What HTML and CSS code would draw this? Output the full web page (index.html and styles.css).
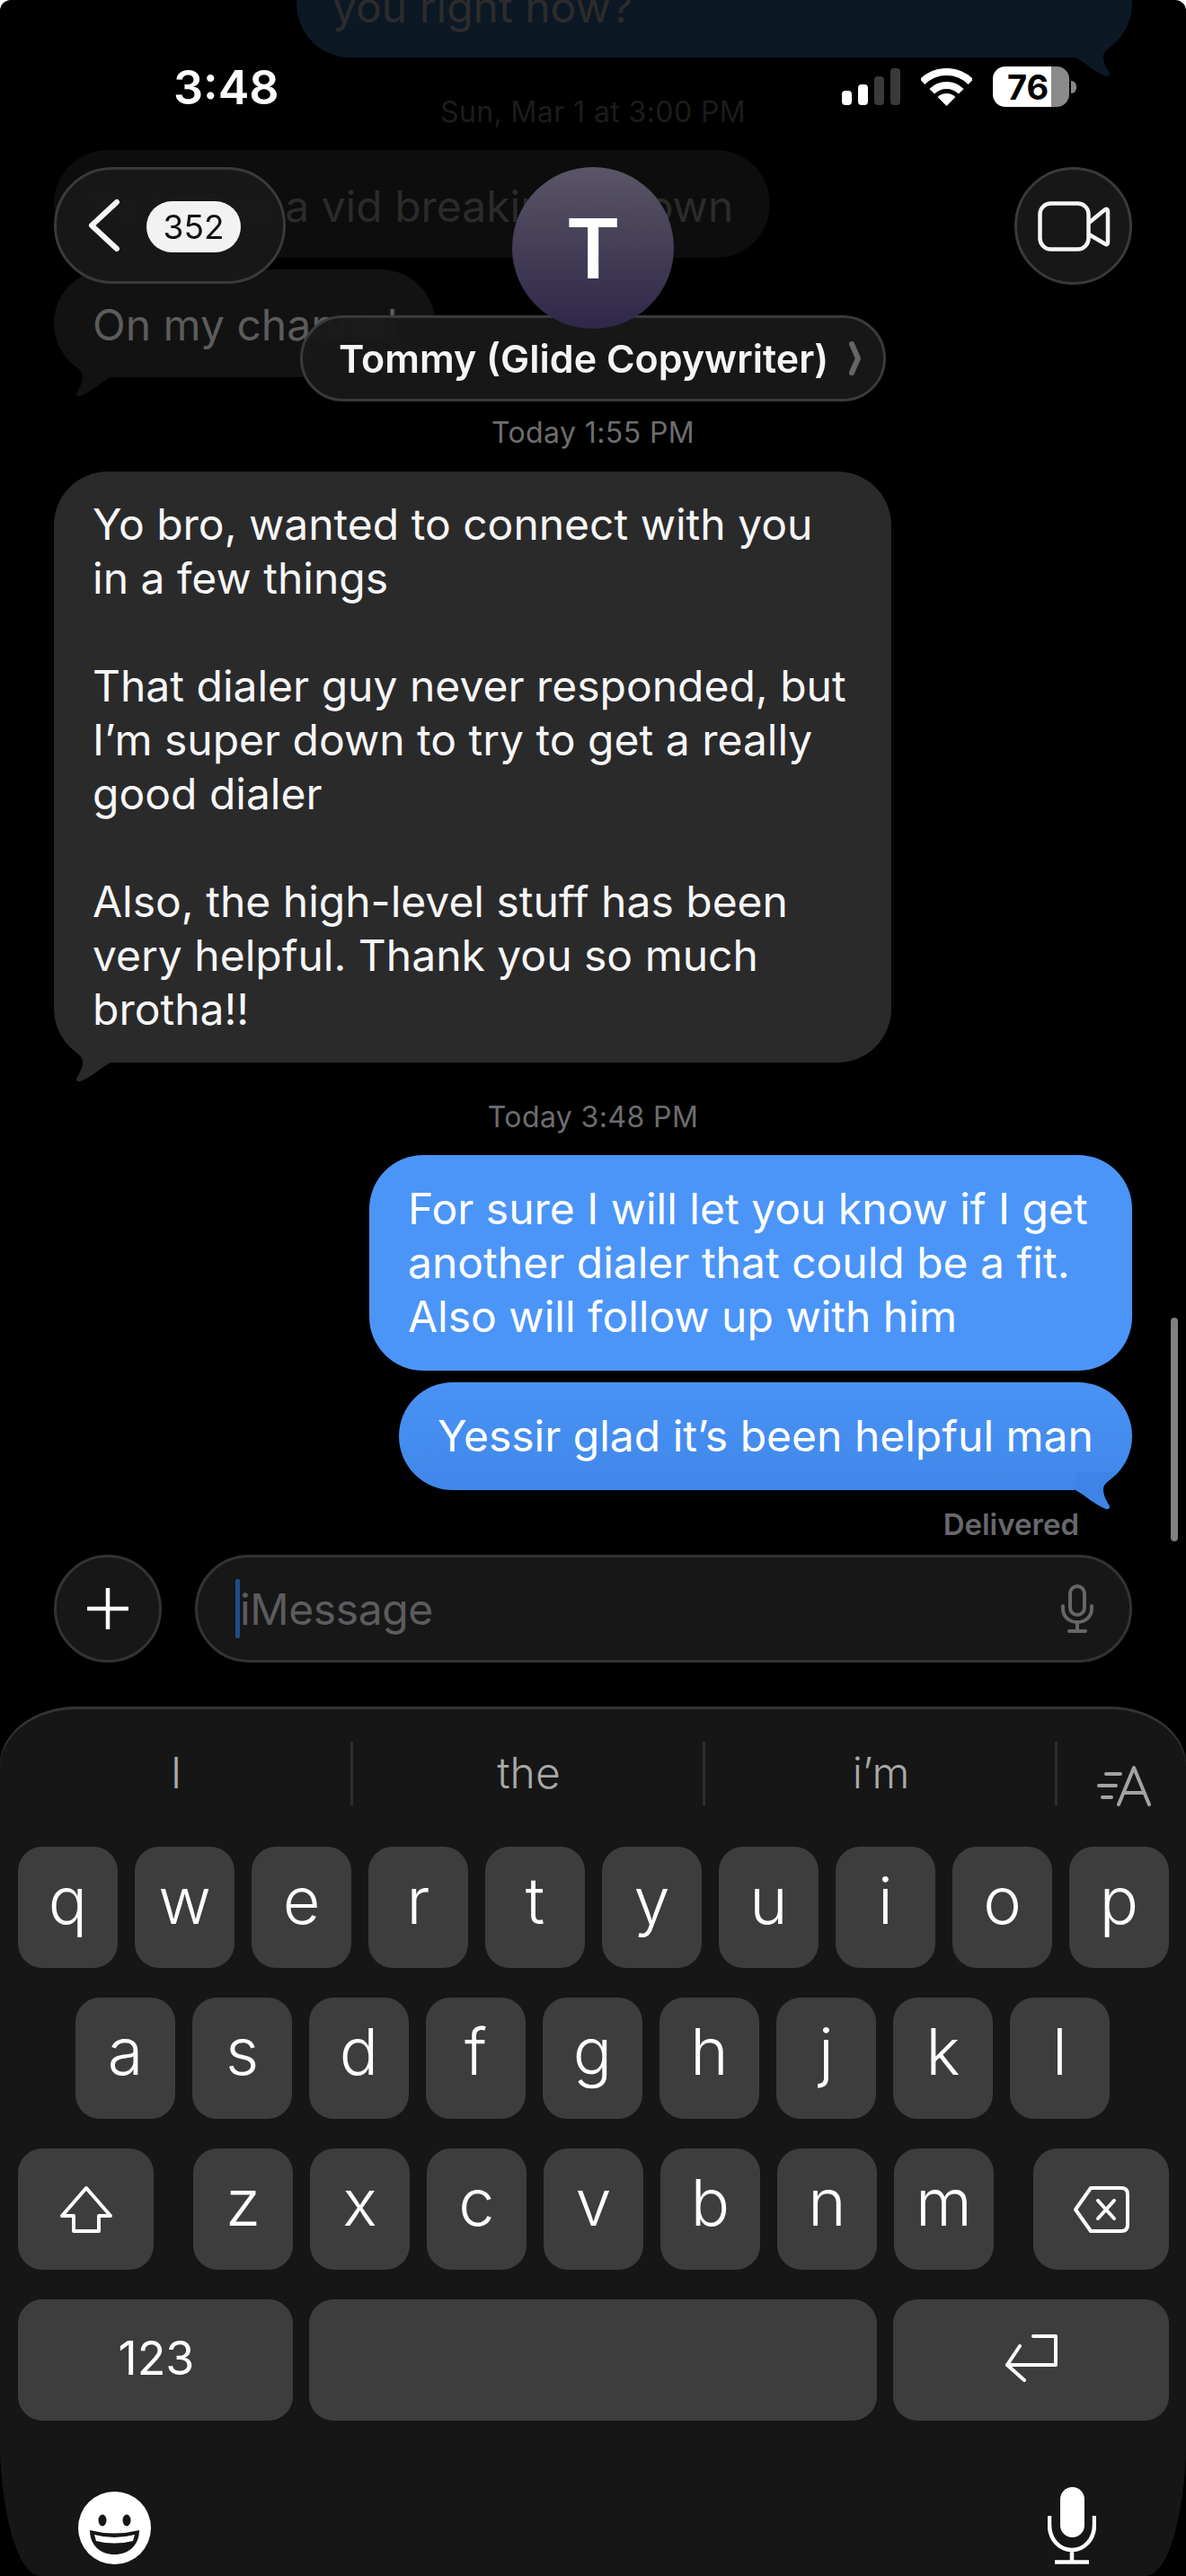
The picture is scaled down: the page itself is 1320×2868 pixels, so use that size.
FILE: index.html
```html
<!DOCTYPE html>
<html lang="en">
<head>
<meta charset="utf-8">
<title>Messages</title>
<link rel="stylesheet" href="styles.css">
</head>
<body>
<div class="screen">
  <main class="thread">
    <div class="bubble faded-blue bubble-top">you right now?
      <svg class="tail tail-right" viewBox="0 0 64 44"><path d="M18 2C24 12 32 14 32 21C32 29 28 34 25 40Q25 44 29 43C42 38 52 28 63 22V2Z"/></svg>
    </div>
    <div class="stamp stamp-dim stamp-sun">Sun, Mar 1 at 3:00 PM</div>
    <div class="bubble faded-a">Ya I have a vid breaking it down</div>
    <div class="bubble faded-b">On my channel
      <svg class="tail tail-left" viewBox="0 0 64 44"><path d="M18 2C24 12 32 14 32 21C32 29 28 34 25 40Q25 44 29 43C42 38 52 28 63 22V2Z"/></svg>
    </div>
    <div class="stamp stamp-one">Today 1:55 PM</div>
    <div class="bubble incoming">Yo bro, wanted to connect with you<br>in a few things<br><br>That dialer guy never responded, but<br>I’m super down to try to get a really<br>good dialer<br><br>Also, the high-level stuff has been<br>very helpful. Thank you so much<br>brotha!!
      <svg class="tail tail-left" viewBox="0 0 64 44"><path d="M18 2C24 12 32 14 32 21C32 29 28 34 25 40Q25 44 29 43C42 38 52 28 63 22V2Z"/></svg>
    </div>
    <div class="stamp stamp-two">Today 3:48 PM</div>
    <div class="bubble outgoing out-one">For sure I will let you know if I get<br>another dialer that could be a fit.<br>Also will follow up with him</div>
    <div class="bubble outgoing out-two">Yessir glad it’s been helpful man
      <svg class="tail tail-right" viewBox="0 0 64 44"><path d="M18 2C24 12 32 14 32 21C32 29 28 34 25 40Q25 44 29 43C42 38 52 28 63 22V2Z"/></svg>
    </div>
    <div class="delivered">Delivered</div>
  </main>

  <section class="composer">
    <div class="plus">
      <svg width="46" height="46" viewBox="0 0 46 46"><path d="M23 1V45M1 23H45" stroke="#fff" stroke-width="4.5" stroke-linecap="round" fill="none"/></svg>
    </div>
    <div class="field">
      <span class="caret"></span>
      <span class="placeholder">iMessage</span>
      <svg class="field-mic" width="36" height="54" viewBox="0 0 36 54" fill="none" stroke="#666" stroke-width="4" stroke-linecap="round"><rect x="10" y="2" width="16" height="32" rx="8"/><path d="M2 24V27C2 36 9 42 18 42C27 42 34 36 34 27V24M18 42V52M9 52H27"/></svg>
    </div>
  </section>

  <section class="keyboard">
    <div class="suggest">
      <div class="sug">I</div>
      <div class="sug sug-line">the</div>
      <div class="sug sug-line">i’m</div>
      <div class="sug sug-line sug-icon">
        <svg width="60" height="46" viewBox="0 0 60 46" fill="none" stroke="#a3a3a3" stroke-width="4" stroke-linecap="round" stroke-linejoin="round"><path d="M10 10H26M2 23H21M6 36H16"/><path d="M24 44L41 3L58 44M30 31H52"/></svg>
      </div>
    </div>
    <div class="rows">
      <div class="row"><span class="key">q</span><span class="key">w</span><span class="key">e</span><span class="key">r</span><span class="key">t</span><span class="key">y</span><span class="key">u</span><span class="key">i</span><span class="key">o</span><span class="key">p</span></div>
      <div class="row row-home"><span class="key">a</span><span class="key">s</span><span class="key">d</span><span class="key">f</span><span class="key">g</span><span class="key">h</span><span class="key">j</span><span class="key">k</span><span class="key">l</span></div>
      <div class="row row-third">
        <span class="key key-mod">
          <svg width="60" height="54" viewBox="0 0 60 54" fill="none" stroke="#fff" stroke-width="4" stroke-linejoin="round"><path d="M30 3L57 34H44V51H16V34H3Z"/></svg>
        </span>
        <div class="letters"><span class="key">z</span><span class="key">x</span><span class="key">c</span><span class="key">v</span><span class="key">b</span><span class="key">n</span><span class="key">m</span></div>
        <span class="key key-mod">
          <svg width="64" height="54" viewBox="0 0 64 54" fill="none" stroke="#fff" stroke-width="4" stroke-linejoin="round" stroke-linecap="round"><path d="M20 3H54Q61 3 61 10V44Q61 51 54 51H20L3 27Z"/><path d="M28 17L46 37M46 17L28 37"/></svg>
        </span>
      </div>
      <div class="row row-bottom">
        <span class="key key-num">123</span>
        <span class="key key-space"></span>
        <span class="key key-return">
          <svg width="60" height="54" viewBox="0 0 60 54" fill="none" stroke="#fff" stroke-width="4" stroke-linejoin="round" stroke-linecap="round"><path d="M32 3H57V35H3"/><path d="M17 14L3 35L22 52"/></svg>
        </span>
      </div>
    </div>
    <div class="kb-foot">
      <svg width="81" height="81" viewBox="0 0 81 81"><circle cx="40.5" cy="40.5" r="40.5" fill="#fff"/><ellipse cx="27" cy="32" rx="4.5" ry="6.5" fill="#161616"/><ellipse cx="54" cy="32" rx="4.5" ry="6.5" fill="#161616"/><path d="M13 43Q40 50 68 43C68 60 56 70 40.5 70C25 70 13 60 13 43Z" fill="#161616"/><path d="M18 48Q40 54 63 48L61 55Q40 60 20 55Z" fill="#fff"/></svg>
      <svg width="54" height="86" viewBox="0 0 54 86" fill="none" stroke="#fff" stroke-width="4.5"><rect x="14" y="0" width="27" height="56" rx="13.5" fill="#fff" stroke="none"/><path d="M2 32V42C2 58 13 70 27 70C41 70 52 58 52 42V32M27 70V83M8 83.5H46"/></svg>
    </div>
  </section>

  <header class="nav">
    <div class="glass back">
      <svg width="36" height="60" viewBox="0 0 36 60" fill="none" stroke="#f5f5f5" stroke-width="6" stroke-linecap="round" stroke-linejoin="round"><path d="M32 4L4 30L32 56"/></svg>
      <span class="badge">352</span>
    </div>
    <div class="glass video">
      <svg width="84" height="56" viewBox="0 0 84 56" fill="none" stroke="#f5f5f5" stroke-width="4.5" stroke-linejoin="round"><rect x="2.5" y="2.5" width="54" height="51" rx="12"/><path d="M57 24L74 10Q78 7 78 12V45Q78 50 74 47L57 37"/></svg>
    </div>
    <div class="contact">
      <div class="glass name"><span>Tommy (Glide Copywriter)</span>
        <svg width="14" height="38" viewBox="0 0 14 38" fill="none" stroke="#666" stroke-width="6" stroke-linecap="round" stroke-linejoin="round"><path d="M3 3L10 19L3 35"/></svg>
      </div>
      <div class="avatar">T</div>
    </div>
  </header>

  <div class="status">
    <span class="clock">3:48</span>
    <div class="indicators">
      <svg width="65" height="42" viewBox="0 0 65 42"><rect x="0" y="25" width="11" height="16" rx="4" fill="#fff"/><rect x="18" y="18" width="11" height="23" rx="4" fill="#fff"/><rect x="36" y="9" width="11" height="32" rx="4" fill="#3a3a3a"/><rect x="54" y="0" width="11" height="41" rx="4" fill="#3a3a3a"/></svg>
      <svg width="57" height="42" viewBox="0 0 57 42" fill="none" stroke="#fff" stroke-width="8"><path d="M1.6 15.1A38 38 0 0 1 55.4 15.1"/><path d="M12.24 25.74A23 23 0 0 1 44.76 25.74"/><path d="M28.5 42L18.6 32.1A14 14 0 0 1 38.4 32.1Z" fill="#fff" stroke="none"/></svg>
      <div class="battery-wrap"><span class="battery">76</span><span class="nub"></span></div>
    </div>
  </div>

  <div class="scrollbar"></div>
</div>
</body>
</html>
```

FILE: styles.css
```css
* { box-sizing: border-box; }
html, body { margin: 0; padding: 0; background: #fff; }
body { width: 1320px; height: 2868px; overflow: hidden; font-family: Inter, "Liberation Sans", sans-serif; }

.screen {
  position: relative;
  width: 1320px;
  height: 2868px;
  background: #000;
  border-radius: 12px 12px 0 0;
  overflow: hidden;
  display: flex;
  flex-direction: column;
}

/* thread */
.thread { display: flex; flex-direction: column; padding: 0 60px; }
.bubble {
  position: relative;
  flex: none;
  padding: 30px 43px;
  border-radius: 60px;
  font-size: 48px;
  line-height: 60px;
  letter-spacing: 0;
  white-space: nowrap;
  color: #f6f6f6;
}
.tail { position: absolute; bottom: -22px; width: 64px; height: 44px; }
.tail-left { left: 0; }
.tail-right { right: 0; transform: scaleX(-1); }

.bubble-top { width: 930px; align-self: flex-end; margin-top: -56px; padding: 34px 43px 26px 40px; background: #0c1824; color: #2c2c2c; }
.bubble-top .tail { fill: #0c1824; }
.faded-a { width: 797px; padding: 33px 43px 27px 39px; background: #0d0d0d; color: #2b2b2b; margin-bottom: 13px; }
.faded-b { width: 424px; padding: 32px 43px 28px; background: #121212; color: #5c5c5c; }
.faded-b .tail { fill: #121212; }
.incoming { width: 932px; background: #2a2a2b; padding: 29px 43px; }
.incoming .tail { fill: #2a2a2b; }
.outgoing { align-self: flex-end; color: #fff; }
.out-one { width: 849px; background: #4b95f8; margin-bottom: 13px; }
.out-two { width: 816px; background: linear-gradient(#4a93f6, #3f87e8); }
.out-two .tail { fill: #3d84e6; }

.stamp { height: 36px; line-height: 36px; text-align: center; font-size: 32px; font-weight: 400; color: #6d6d70; letter-spacing: 0.4px; }
.stamp-dim { color: #1c1c1c; }
.stamp-sun { margin: 43px 0 24px; }
.stamp-one { margin: 44px 0 25px; }
.stamp-two { margin: 43px 0 24px; }
.delivered { align-self: flex-end; height: 36px; line-height: 36px; margin: 20px 59px 0 0; font-size: 33px; font-weight: 600; color: #68686c; }

/* composer */
.composer { display: flex; gap: 37px; padding: 16px 60px 0; }
.plus {
  width: 120px; height: 120px; flex: none;
  display: flex; align-items: center; justify-content: center;
  background: #171717; border: 3px solid #333; border-radius: 50%;
}
.field {
  flex: 1; height: 120px;
  display: flex; align-items: center;
  padding: 0 40px 0 42px;
  background: #171717; border: 3px solid #333; border-radius: 60px;
}
.caret { width: 5px; height: 66px; background: #1e4d8c; border-radius: 2px; flex: none; }
.placeholder { font-size: 48px; color: #5c5c5e; flex: 1; letter-spacing: -0.4px; }
.field-mic { flex: none; }

/* keyboard */
.keyboard {
  flex: 1;
  margin-top: 49px;
  padding: 39px 0 0;
  background: #161616;
  box-shadow: inset 0 3px 0 #333;
  border-radius: 85px 85px 45px 45px / 65px 65px 155px 155px;
}
.suggest { display: flex; height: 71px; }
.sug { width: 392px; height: 71px; display: flex; align-items: center; justify-content: center; font-size: 48px; font-weight: 300; color: #a8a8a8; padding: 0 0 2px 2px; }
.sug:first-child { width: 390px; }
.sug-line { border-left: 3px solid #2e2e2e; }
.sug-icon { width: 146px; padding: 26px 0 0 44px; justify-content: flex-start; }
.rows { display: flex; flex-direction: column; gap: 33px; padding: 46px 19px 0 20px; }
.row { display: flex; gap: 19px; height: 135px; }
.row-home { padding-left: 64px; }
.row-third { justify-content: space-between; }
.letters { display: flex; gap: 19px; }
.key {
  width: 111px; height: 135px; flex: none;
  display: flex; align-items: center; justify-content: center;
  padding-bottom: 16px;
  background: #3d3d3d; border-radius: 27px;
  color: #fff; font-size: 72px; font-weight: 300; line-height: 72px;
}
.key-mod { width: 151px; padding-bottom: 0; }
.key-num { width: 306px; font-size: 52px; font-weight: 400; padding: 0 0 4px 2px; }
.key-space { width: 632px; margin-left: -1px; }
.key-return { width: 307px; margin-left: -1px; padding: 0 0 6px 0; }
.kb-foot { display: flex; justify-content: space-between; align-items: flex-end; padding: 74px 100px 0 87px; height: 160px; }

/* overlays */
.status {
  position: absolute; left: 0; right: 0; top: 74px; height: 45px;
  display: flex; align-items: center; justify-content: space-between;
  padding: 0 122px 0 193px;
}
.clock { color: #fff; font-size: 52px; font-weight: 600; margin-top: 2px; }
.indicators { display: flex; align-items: center; gap: 23px; }
.battery-wrap { display: flex; align-items: center; gap: 2px; }
.battery {
  width: 85px; height: 45px;
  display: flex; align-items: center; padding-left: 16px;
  border-radius: 14px;
  background: linear-gradient(90deg, #fff 76%, #8a8a8a 76%);
  color: #000; font-size: 38px; font-weight: 700;
}
.nub { width: 6px; height: 14px; background: #8a8a8a; border-radius: 0 6px 6px 0; }

.nav { position: absolute; left: 60px; right: 60px; top: 186px; display: flex; justify-content: space-between; align-items: flex-start; }
.glass {
  background: rgba(25, 25, 25, 0.93);
  border: 3px solid #3a3a3a;
  -webkit-backdrop-filter: blur(3px);
  backdrop-filter: blur(3px);
}
.back { width: 258px; height: 130px; border-radius: 65px; display: flex; align-items: center; gap: 29px; padding-left: 35px; }
.badge { width: 105px; height: 57px; border-radius: 29px; background: #f2f2f2; color: #111; display: flex; align-items: center; justify-content: center; font-size: 37px; font-weight: 400; margin-top: 2px; }
.video { width: 131px; height: 131px; border-radius: 50%; display: flex; align-items: center; justify-content: center; padding-left: 5px; }
.contact { position: absolute; left: 274px; top: 0; width: 652px; height: 261px; display: flex; justify-content: center; }
.avatar {
  position: absolute; left: 236px; top: 0;
  width: 180px; height: 180px; border-radius: 50%;
  background: linear-gradient(#5a5566, #2f2748);
  color: #fff; font-size: 92px; font-weight: 600;
  display: flex; align-items: center; justify-content: center;
}
.name {
  position: absolute; left: 0; top: 165px;
  width: 652px; height: 96px; border-radius: 48px;
  display: flex; align-items: center; gap: 23px;
  padding-left: 40px;
  color: #f5f5f5; font-size: 43px; font-weight: 600; white-space: nowrap;
}
.scrollbar { position: absolute; left: 1303px; top: 1467px; width: 8px; height: 249px; border-radius: 4px; background: #808080; }
```
